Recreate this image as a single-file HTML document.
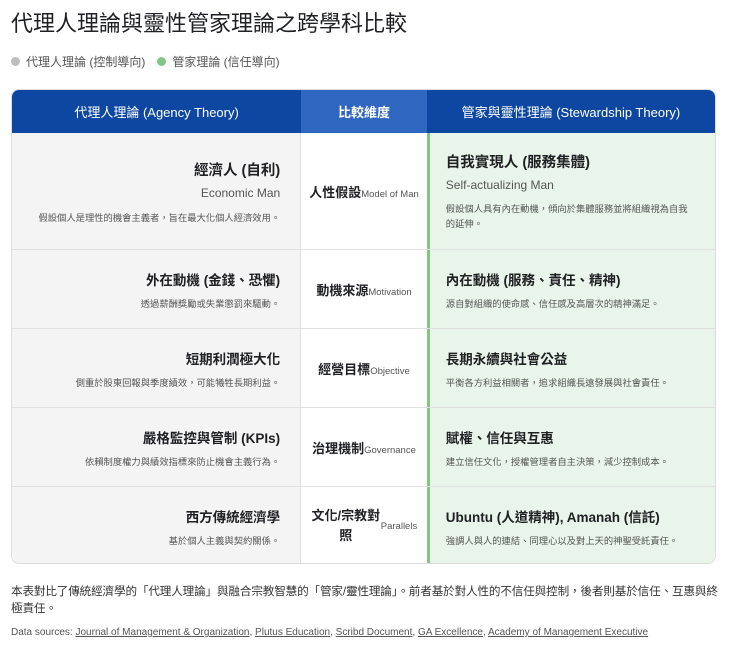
<!DOCTYPE html>
<html><head><meta charset="utf-8"><style>
*{margin:0;padding:0;box-sizing:border-box}
body{width:740px;height:669px;background:#fff;font-family:"Liberation Sans","Noto Sans CJK TC",sans-serif;color:#202124;position:relative;overflow:hidden}
h1{position:absolute;left:11px;top:6px;font-size:22px;font-weight:400;color:#202124;white-space:nowrap}
.leg{position:absolute;left:11px;top:53px;font-size:12px;color:#555;display:flex;align-items:center}
.dot{width:9px;height:9px;border-radius:50%;display:inline-block;margin-right:6px}
.tbl{position:absolute;left:11px;top:89px;width:705px;height:475px;border-radius:8px;overflow:hidden;border:1px solid #ddd}
.hd{display:flex;height:43px;background:#0d47a1;color:#fff;font-size:13px}
.hd div{display:flex;align-items:center;justify-content:center}
.row{display:flex;border-top:1px solid #e0e0e0}
.l{width:290px;background:#f4f4f4;text-align:right;padding:0 20px 0 10px;display:flex;flex-direction:column;justify-content:center;border-right:1px solid #e0e0e0}
.m{width:126px;background:#fff;display:flex;align-items:center;justify-content:center;font-weight:700;font-size:13px}
.m .bl{display:flex;align-items:baseline}
.m small{font-weight:400;font-size:9.5px;color:#555}
.r{width:289px;background:#e9f5ea;border-left:3px solid #81c784;padding:0 16px;display:flex;flex-direction:column;justify-content:center}
.t{font-weight:700;font-size:13.5px}
.s{font-size:9.3px;color:#555;margin-top:7px}
.e{font-size:12px;color:#555;margin-top:6px}
.foot{position:absolute;left:11px;top:583px;width:714px;font-size:11.6px;line-height:17px;color:#333;letter-spacing:-0.15px}
.src{position:absolute;left:11px;top:627px;font-size:10px;color:#555}
.src u{color:#555}
</style></head><body>
<h1>代理人理論與靈性管家理論之跨學科比較</h1>
<div class="leg"><span class="dot" style="background:#bdbdbd"></span>代理人理論 (控制導向)<span class="dot" style="background:#81c784;margin-left:12px"></span>管家理論 (信任導向)</div>
<div class="tbl">
<div class="hd"><div style="width:290px">代理人理論 (Agency Theory)</div><div style="width:126px;background:#2f66c0;font-weight:700">比較維度</div><div style="width:289px">管家與靈性理論 (Stewardship Theory)</div></div>
<div class="row" style="height:116px;border-top:0"><div class="l"><div class="t" style="font-size:14.5px">經濟人 (自利)</div><div class="e">Economic Man</div><div class="s" style="margin-top:10px">假設個人是理性的機會主義者，旨在最大化個人經濟效用。</div></div><div class="m"><div class="bl">人性假設<small>Model of Man</small></div></div><div class="r"><div class="t" style="font-size:14.5px">自我實現人 (服務集體)</div><div class="e">Self-actualizing Man</div><div class="s" style="margin-top:10px;line-height:15px;padding-right:8px">假設個人具有內在動機，傾向於集體服務並將組織視為自我的延伸。</div></div></div>
<div class="row" style="height:79px"><div class="l"><div class="t">外在動機 (金錢、恐懼)</div><div class="s">透過薪酬獎勵或失業懲罰來驅動。</div></div><div class="m"><div class="bl">動機來源<small>Motivation</small></div></div><div class="r"><div class="t">內在動機 (服務、責任、精神)</div><div class="s">源自對組織的使命感、信任感及高層次的精神滿足。</div></div></div>
<div class="row" style="height:79px"><div class="l"><div class="t">短期利潤極大化</div><div class="s">側重於股東回報與季度績效，可能犧牲長期利益。</div></div><div class="m"><div class="bl">經營目標<small>Objective</small></div></div><div class="r"><div class="t">長期永續與社會公益</div><div class="s">平衡各方利益相關者，追求組織長遠發展與社會責任。</div></div></div>
<div class="row" style="height:79px"><div class="l"><div class="t">嚴格監控與管制 (KPIs)</div><div class="s">依賴制度權力與績效指標來防止機會主義行為。</div></div><div class="m"><div class="bl">治理機制<small>Governance</small></div></div><div class="r"><div class="t">賦權、信任與互惠</div><div class="s">建立信任文化，授權管理者自主決策，減少控制成本。</div></div></div>
<div class="row" style="height:79px"><div class="l"><div class="t">西方傳統經濟學</div><div class="s">基於個人主義與契約關係。</div></div><div class="m"><span style="width:70px;text-align:center;line-height:20px">文化/宗教對照</span><small>Parallels</small></div><div class="r"><div class="t">Ubuntu (人道精神), Amanah (信託)</div><div class="s">強調人與人的連結、同理心以及對上天的神聖受託責任。</div></div></div>
</div>
<div class="foot">本表對比了傳統經濟學的「代理人理論」與融合宗教智慧的「管家/靈性理論」。前者基於對人性的不信任與控制，後者則基於信任、互惠與終極責任。</div>
<div class="src">Data sources: <u>Journal of Management &amp; Organization</u>, <u>Plutus Education</u>, <u>Scribd Document</u>, <u>GA Excellence</u>, <u>Academy of Management Executive</u></div>
</body></html>
